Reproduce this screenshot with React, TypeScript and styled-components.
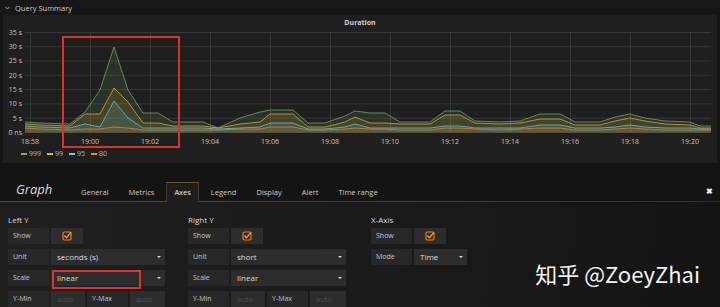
import React from "react";
import styled, { createGlobalStyle } from "styled-components";

const GlobalStyle = createGlobalStyle`
  html, body { margin: 0; padding: 0; background: #141414; }
  body { font-family: "Open Sans", "Noto Sans", sans-serif; }
  * { box-sizing: border-box; }
`;

const Page = styled.div`
  width: 720px;
  height: 307px;
  overflow: hidden;
  background: #141414;
  display: flex;
  flex-direction: column;
`;

const RowHeader = styled.div`
  height: 15px;
  flex: 0 0 15px;
  display: flex;
  align-items: center;
  gap: 5px;
  padding-left: 5px;
  background: #171717;
  color: #c9c9c9;
  font-size: 7.5px;
`;

const PanelWrap = styled.div`
  padding: 0 3px;
  flex: 0 0 148px;
`;

const Panel = styled.div`
  position: relative;
  height: 148px;
  background: #201f20;
  display: flex;
  flex-direction: column;
`;

const PanelTitle = styled.div`
  height: 13px;
  padding-top: 3px;
  line-height: 10px;
  text-align: center;
  font-size: 7px;
  font-weight: 700;
  color: #d0d0d0;
`;

const ChartSvg = styled.svg`
  display: block;
  flex: 0 0 119px;
`;

const Legend = styled.div`
  height: 13px;
  display: flex;
  align-items: center;
  gap: 6px;
  padding-left: 18px;
  font-size: 7px;
  color: #b5b5b5;
`;

const LegendItem = styled.span`
  display: inline-flex;
  align-items: center;
  gap: 2px;
`;

const LegendDash = styled.i<{ $c: string }>`
  display: inline-block;
  width: 6px;
  height: 2px;
  background: ${(p) => p.$c};
`;

const Annotation = styled.div`
  position: absolute;
  left: 59px;
  top: 21px;
  width: 118px;
  height: 112px;
  border: 2px solid #d9342f;
  pointer-events: none;
`;

const Editor = styled.div`
  flex: 1;
  display: flex;
  flex-direction: column;
`;

const EditorHeader = styled.div`
  flex: 0 0 39px;
  height: 39px;
  display: flex;
  align-items: flex-end;
  padding-left: 16px;
  background: #141414;
  border-bottom: 1px solid;
  border-image: linear-gradient(to right, #5c4832, #4f3a2b 60%, #4a2624) 1;
`;

const EditorTitle = styled.div`
  flex: 0 0 57px;
  height: 19px;
  line-height: 15px;
  font-size: 13px;
  font-style: italic;
  color: #d8d9da;
  padding-bottom: 4px;
`;

const Tabs = styled.div`
  display: flex;
  gap: 4px;
  height: 19px;
`;

const Tab = styled.div<{ $active?: boolean }>`
  height: 20px;
  padding: 0 7px;
  line-height: 19px;
  font-size: 7.5px;
  color: ${(p) => (p.$active ? "#e8e8e8" : "#c8c8c8")};
  border: 1px solid ${(p) => (p.$active ? "#4d3e30" : "transparent")};
  border-top-color: ${(p) => (p.$active ? "#6a5238" : "transparent")};
  border-bottom: none;
  background: ${(p) => (p.$active ? "#1e1c1c" : "transparent")};
  margin-bottom: -1px;
`;

const Close = styled.div`
  margin-left: auto;
  margin-right: 7px;
  margin-bottom: 6px;
  font-size: 8px;
  font-weight: 700;
  color: #f0f0f0;
  line-height: 8px;
`;

const EditorBody = styled.div`
  position: relative;
  flex: 1;
  display: flex;
  align-items: flex-start;
  padding: 12px 0 0 8px;
  background: linear-gradient(100deg, #201e1e 0%, #1c1b1b 45%, #141414 100%);
`;

const Section = styled.div<{ $w: number; $ml?: number }>`
  width: ${(p) => p.$w}px;
  margin-left: ${(p) => p.$ml ?? 0}px;
  display: flex;
  flex-direction: column;
  gap: 5px;
`;

const SectionTitle = styled.div`
  height: 12px;
  line-height: 12px;
  font-size: 8px;
  color: #d8d9da;
  margin-bottom: -3px;
`;

const FormRow = styled.div`
  display: flex;
  gap: 2px;
  height: 16px;
`;

const Label = styled.div<{ $w: number }>`
  flex: 0 0 ${(p) => p.$w}px;
  background: #282828;
  color: #c6c6c6;
  font-size: 7px;
  line-height: 16px;
  padding-left: 5px;
  white-space: nowrap;
`;

const Value = styled.div<{ $w: number }>`
  position: relative;
  flex: 0 0 ${(p) => p.$w}px;
  background: #2d2d2d;
  color: #dcdcdc;
  font-size: 8px;
  line-height: 16px;
  padding-left: 6px;
  display: flex;
  align-items: center;
`;

const Placeholder = styled.span`
  color: #4f4f4f;
  font-size: 7.5px;
`;

const Caret = styled.i`
  position: absolute;
  right: 4px;
  top: 7px;
  width: 0;
  height: 0;
  border-left: 2px solid transparent;
  border-right: 2px solid transparent;
  border-top: 2px solid #d8d8d8;
`;

const CheckCell = styled.div<{ $w: number }>`
  flex: 0 0 ${(p) => p.$w}px;
  background: #2d2d2d;
  display: flex;
  align-items: center;
  justify-content: center;
`;

const RedBox = styled.div`
  position: absolute;
  left: 1px;
  top: 0;
  width: 89px;
  height: 19px;
  border: 2px solid #d9342f;
  pointer-events: none;
`;

const Watermark = styled.div`
  position: absolute;
  right: 20px;
  top: 60px;
  font-family: "Noto Sans CJK SC", "Noto Sans", sans-serif;
  font-size: 22px;
  line-height: 22px;
  color: #f2f2f2;
  white-space: nowrap;
`;

const Check = () => (
  <svg width="10" height="10" viewBox="0 0 10 10">
    <rect x="1" y="1" width="8" height="8" rx="1.5" fill="#3a2a1c" stroke="#ec7d1e" strokeWidth="1.2" />
    <path d="M2.8 5 L4.5 6.8 L8.8 1.6" fill="none" stroke="#f39a3a" strokeWidth="1.4" strokeLinecap="round" />
  </svg>
);

const xs = [25, 40, 70, 85, 100, 114, 128, 143, 158, 173, 203, 218, 240, 260, 270, 293, 308, 325, 345, 355, 370, 385, 400, 430, 445, 460, 475, 500, 520, 540, 560, 575, 600, 615, 630, 645, 665, 690, 700, 711];

const series = [
  {
    name: "999",
    color: "#7eb26d",
    ys: [122, 123, 124, 112, 90, 47, 90, 113, 113, 122, 122, 128, 118, 112, 110, 110, 123, 123, 116, 111, 113, 113, 122, 122, 111, 111, 121, 122, 121, 114, 114, 122, 122, 117, 114, 118, 121, 122, 126, 126],
  },
  {
    name: "99",
    color: "#eab839",
    ys: [124, 125, 126, 114, 114, 88, 102, 123, 123, 126, 126, 128, 124, 122, 114, 114, 127, 127, 122, 117, 123, 123, 124, 124, 115, 115, 123, 124, 123, 119, 119, 125, 125, 121, 118, 121, 124, 125, 128, 128],
  },
  {
    name: "95",
    color: "#6ed0e0",
    ys: [126, 127, 128, 124, 127, 101, 118, 128, 128, 128, 128, 129, 128, 127, 123, 123, 129, 129, 127, 124, 128, 128, 128, 128, 126, 126, 128, 128, 128, 125, 125, 128, 128, 127, 125, 127, 128, 128, 129, 129],
  },
  {
    name: "80",
    color: "#ef843c",
    ys: [128, 129, 130, 129, 129, 127, 128, 130, 130, 130, 130, 130, 129, 129, 127, 127, 130, 130, 129, 128, 129, 129, 130, 130, 128, 128, 129, 130, 129, 128, 128, 130, 130, 129, 128, 129, 130, 130, 130, 130],
  },
];

const yLabels = ["35 s", "30 s", "25 s", "20 s", "15 s", "10 s", "5 s", "0 ns"];
const xLabels = ["18:58", "19:00", "19:02", "19:04", "19:06", "19:08", "19:10", "19:12", "19:14", "19:16", "19:18", "19:20"];
const TOP = 32.5;
const STEP = 100 / 7;
const BASE = 132.5;

const DurationChart = () => {
  const line = (ys: number[]) => xs.map((x, i) => `${i ? "L" : "M"}${x} ${ys[i]}`).join(" ");
  const area = (ys: number[]) => `${line(ys)} L711 ${BASE} L25 ${BASE} Z`;
  return (
    <ChartSvg width="714" height="119" viewBox="3 28 714 119">
      {yLabels.map((l, i) => (
        <g key={l}>
          <line x1="25" x2="711" y1={TOP + i * STEP} y2={TOP + i * STEP} stroke="#363636" strokeWidth="1" />
          <text x="22" y={TOP + i * STEP + 2.4} textAnchor="end" fontSize="7" fill="#c4c4c4" fontFamily="Open Sans">
            {l}
          </text>
        </g>
      ))}
      {xLabels.map((l, i) => (
        <g key={l}>
          <line x1={30.5 + i * 60} x2={30.5 + i * 60} y1={TOP} y2={BASE} stroke="#363636" strokeWidth="1" />
          <text x={30 + i * 60} y="144" textAnchor="middle" fontSize="7" fill="#c4c4c4" fontFamily="Open Sans">
            {l}
          </text>
        </g>
      ))}
      {series.map((s) => (
        <path key={s.name + "a"} d={area(s.ys)} fill={s.color} fillOpacity="0.13" />
      ))}
      {series.map((s) => (
        <path key={s.name + "l"} d={line(s.ys)} fill="none" stroke={s.color} strokeOpacity="0.7" strokeWidth="1" />
      ))}
    </ChartSvg>
  );
};

const tabs = ["General", "Metrics", "Axes", "Legend", "Display", "Alert", "Time range"];

export default function App() {
  return (
    <>
      <GlobalStyle />
      <Page>
        <RowHeader>
          <svg width="5" height="4" viewBox="0 0 5 4">
            <path d="M0.5 0.8 L2.5 3 L4.5 0.8" fill="none" stroke="#b0b0b0" strokeWidth="0.9" />
          </svg>
          Query Summary
        </RowHeader>
        <PanelWrap>
          <Panel>
            <PanelTitle>Duration</PanelTitle>
            <DurationChart />
            <Legend>
              {series.map((s) => (
                <LegendItem key={s.name}>
                  <LegendDash $c={s.color} />
                  {s.name}
                </LegendItem>
              ))}
            </Legend>
            <Annotation />
          </Panel>
        </PanelWrap>
        <Editor>
          <EditorHeader>
            <EditorTitle>Graph</EditorTitle>
            <Tabs>
              {tabs.map((t) => (
                <Tab key={t} $active={t === "Axes"}>
                  {t}
                </Tab>
              ))}
            </Tabs>
            <Close>✖</Close>
          </EditorHeader>
          <EditorBody>
            <Section $w={157}>
              <SectionTitle>Left Y</SectionTitle>
              <FormRow>
                <Label $w={41}>Show</Label>
                <CheckCell $w={32}>
                  <Check />
                </CheckCell>
              </FormRow>
              <FormRow>
                <Label $w={41}>Unit</Label>
                <Value $w={114}>
                  seconds (s)
                  <Caret />
                </Value>
              </FormRow>
              <FormRow>
                <Label $w={41}>Scale</Label>
                <Value $w={114}>
                  linear
                  <Caret />
                  <RedBox />
                </Value>
              </FormRow>
              <FormRow>
                <Label $w={41}>Y-Min</Label>
                <Value $w={34}>
                  <Placeholder>auto</Placeholder>
                </Value>
                <Label $w={41}>Y-Max</Label>
                <Value $w={35}>
                  <Placeholder>auto</Placeholder>
                </Value>
              </FormRow>
            </Section>
            <Section $w={158} $ml={23}>
              <SectionTitle>Right Y</SectionTitle>
              <FormRow>
                <Label $w={41}>Show</Label>
                <CheckCell $w={32}>
                  <Check />
                </CheckCell>
              </FormRow>
              <FormRow>
                <Label $w={41}>Unit</Label>
                <Value $w={115}>
                  short
                  <Caret />
                </Value>
              </FormRow>
              <FormRow>
                <Label $w={41}>Scale</Label>
                <Value $w={115}>
                  linear
                  <Caret />
                </Value>
              </FormRow>
              <FormRow>
                <Label $w={41}>Y-Min</Label>
                <Value $w={34}>
                  <Placeholder>auto</Placeholder>
                </Value>
                <Label $w={41}>Y-Max</Label>
                <Value $w={36}>
                  <Placeholder>auto</Placeholder>
                </Value>
              </FormRow>
            </Section>
            <Section $w={100} $ml={25}>
              <SectionTitle>X-Axis</SectionTitle>
              <FormRow>
                <Label $w={41}>Show</Label>
                <CheckCell $w={32}>
                  <Check />
                </CheckCell>
              </FormRow>
              <FormRow>
                <Label $w={41}>Mode</Label>
                <Value $w={53}>
                  Time
                  <Caret />
                </Value>
              </FormRow>
            </Section>
            <Watermark>知乎 @ZoeyZhai</Watermark>
          </EditorBody>
        </Editor>
      </Page>
    </>
  );
}
